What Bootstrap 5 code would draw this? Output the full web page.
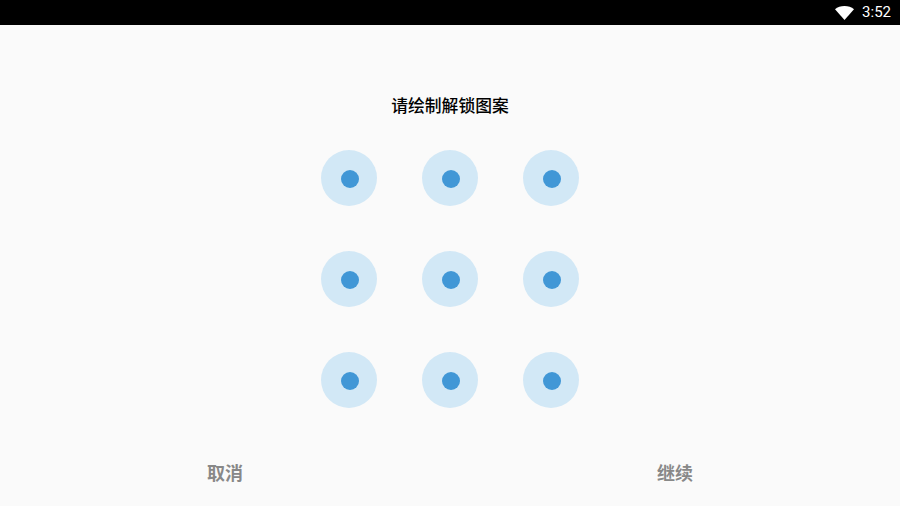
<!DOCTYPE html>
<html lang="zh-CN">
<head>
  <meta charset="UTF-8">
  <title>清绘制解锁图案</title>
  <link href="https://cdn.jsdelivr.net/npm/bootstrap@5.3.0/dist/css/bootstrap.min.css" rel="stylesheet">
  <style>
    html, body { height: 506px; overflow: hidden; }
    body {
      background: #fafafa;
      font-family: "Roboto", "Noto Sans CJK SC", sans-serif;
    }
    .status-strip { height: 25px; background: #000; color: #fff; font-size: 15px; padding-right: 9px; gap: 8px; }
    .lock-title { font-size: 16.8px; line-height: 22px; color: #000; margin-top: 70px; font-weight: 500; }
    .dot-grid { display: grid; grid-template-columns: repeat(3, 56px); gap: 45px; margin-top: 33px; }
    .dot-ring { width: 56px; height: 56px; border-radius: 50%; background: #d2e8f6; }
    .dot-core { width: 18px; height: 18px; margin: 1px 0 0 1px; border-radius: 50%; background: #4197d6; }
    .foot-row { margin-top: 54px; }
    .foot-btn { width: 450px; font-size: 18px; line-height: 24px; font-weight: 700; color: #888; }
  </style>
</head>
<body>
  <div class="status-strip d-flex align-items-center justify-content-end">
    <svg width="19" height="14" viewBox="0 0 19 14"><path d="M0 3.200C2.500 1.200 5.800 0 9.500 0s7 1.200 9.500 3.200L9.500 14z" fill="#fff"/></svg>
    <span>3:52</span>
  </div>
  <div class="d-flex flex-column align-items-center">
    <div class="lock-title">请绘制解锁图案</div>
    <div class="dot-grid">
      <div class="dot-ring d-flex align-items-center justify-content-center"><div class="dot-core"></div></div>
      <div class="dot-ring d-flex align-items-center justify-content-center"><div class="dot-core"></div></div>
      <div class="dot-ring d-flex align-items-center justify-content-center"><div class="dot-core"></div></div>
      <div class="dot-ring d-flex align-items-center justify-content-center"><div class="dot-core"></div></div>
      <div class="dot-ring d-flex align-items-center justify-content-center"><div class="dot-core"></div></div>
      <div class="dot-ring d-flex align-items-center justify-content-center"><div class="dot-core"></div></div>
      <div class="dot-ring d-flex align-items-center justify-content-center"><div class="dot-core"></div></div>
      <div class="dot-ring d-flex align-items-center justify-content-center"><div class="dot-core"></div></div>
      <div class="dot-ring d-flex align-items-center justify-content-center"><div class="dot-core"></div></div>
    </div>
  </div>
  <div class="foot-row d-flex">
    <div class="foot-btn text-center">取消</div>
    <div class="foot-btn text-center">继续</div>
  </div>
  <script src="https://cdn.jsdelivr.net/npm/bootstrap@5.3.0/dist/js/bootstrap.bundle.min.js"></script>
</body>
</html>
